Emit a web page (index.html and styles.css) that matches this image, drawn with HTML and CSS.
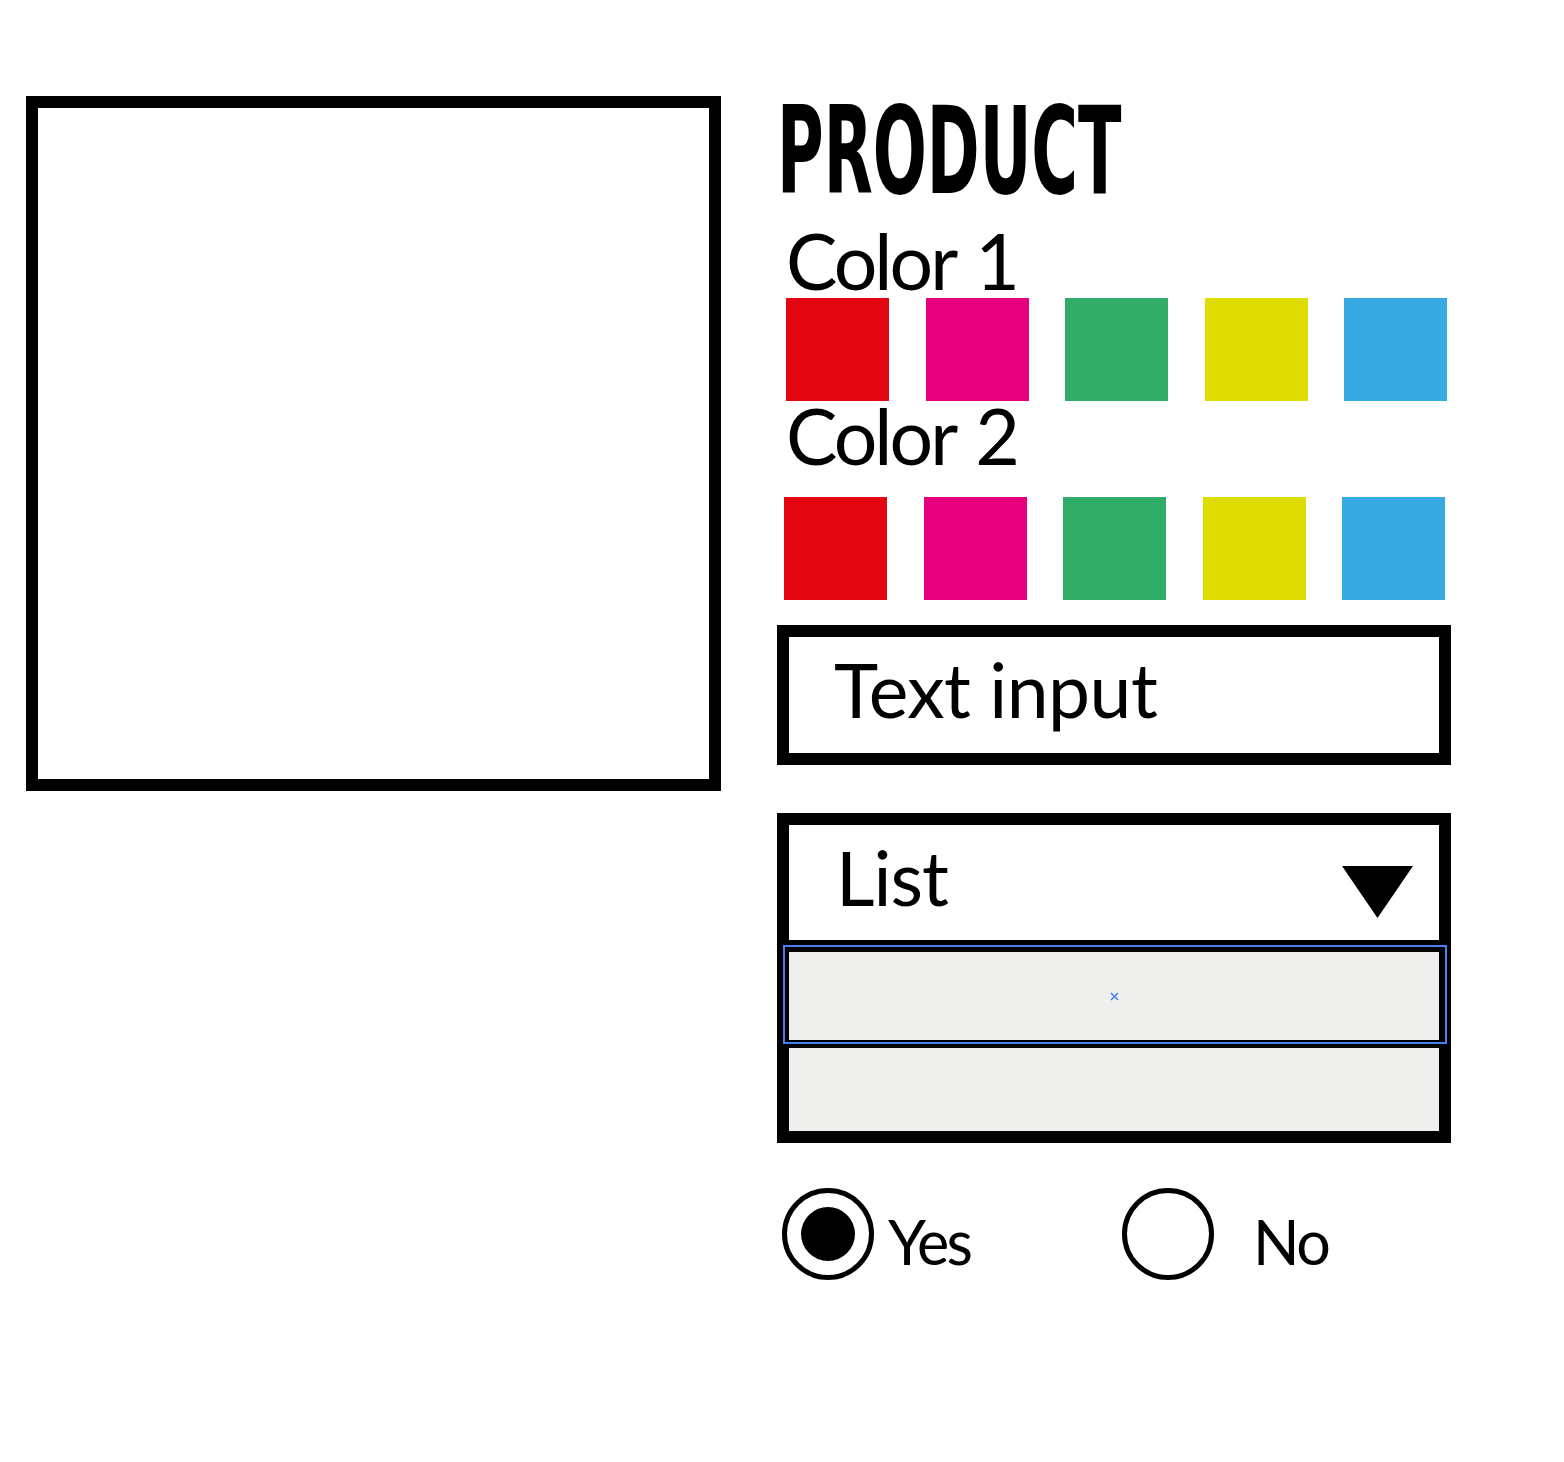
FILE: index.html
```html
<!DOCTYPE html>
<html lang="en">
<head>
    <meta charset="UTF-8">
    <meta name="viewport" content="width=device-width, initial-scale=1.0">
    <title>Product</title>
    <link rel="stylesheet" href="styles.css">
</head>
<body>
    <div class="page">
        <div class="preview"></div>

        <div class="options">
            <h1 class="title">PRODUCT</h1>

            <div class="label">Color 1</div>
            <div class="swatches">
                <span class="swatch red"></span>
                <span class="swatch magenta"></span>
                <span class="swatch green"></span>
                <span class="swatch yellow"></span>
                <span class="swatch blue"></span>
            </div>

            <div class="label label-second">Color 2</div>
            <div class="swatches swatches-second">
                <span class="swatch red"></span>
                <span class="swatch magenta"></span>
                <span class="swatch green"></span>
                <span class="swatch yellow"></span>
                <span class="swatch blue"></span>
            </div>

            <div class="field">Text input</div>

            <div class="list">
                <div class="list-head">
                    <span>List</span>
                    <svg class="list-arrow" width="71" height="52" viewBox="0 0 71 52">
                        <polygon points="0,0 71,0 35.5,52" fill="#000"/>
                    </svg>
                </div>
                <div class="list-item selected">
                    <svg width="9" height="9" viewBox="0 0 9 9">
                        <path d="M1 1 L8 8 M8 1 L1 8" stroke="#4a7ff2" stroke-width="1.6" fill="none"/>
                    </svg>
                </div>
                <div class="list-item list-item-last"></div>
            </div>

            <div class="radios">
                <label class="radio-option">
                    <span class="radio checked"></span>
                    <span class="radio-text">Yes</span>
                </label>
                <label class="radio-option">
                    <span class="radio"></span>
                    <span class="radio-text radio-text-no">No</span>
                </label>
            </div>
        </div>
    </div>
</body>
</html>
```

FILE: styles.css
```css
body {
    margin: 0;
    background-color: #fff;
    color: #000;
    font-family: Lato, "Open Sans", sans-serif;
}
.page {
    display: flex;
    align-items: flex-start;
    gap: 56px;
    padding: 96px 0 0 26px;
}
.preview {
    width: 695px;
    height: 695px;
    border: 12px solid #000;
    box-sizing: border-box;
}
.options {
    width: 674px;
    display: flex;
    flex-direction: column;
}
.title {
    margin: 0;
    font-family: "DejaVu Sans Condensed", "DejaVu Sans", sans-serif;
    font-stretch: condensed;
    font-weight: bold;
    font-size: 122px;
    line-height: 110px;
    white-space: nowrap;
    transform: scaleX(0.58);
    transform-origin: left center;
}
.label {
    margin-top: 16px;
    padding-left: 9px;
    font-size: 77px;
    line-height: 76px;
    letter-spacing: -3px;
    word-spacing: 5px;
}
.label-second {
    margin-top: -4px;
}
.swatches {
    display: grid;
    grid-template-columns: repeat(5, 103px);
    column-gap: 36.5px;
    padding-left: 9px;
}
.swatches-second {
    margin-top: 24px;
    padding-left: 7px;
}
.swatch {
    height: 103px;
}
.red { background-color: #e30613; }
.magenta { background-color: #e6007e; }
.green { background-color: #31ac69; }
.yellow { background-color: #dedc00; }
.blue { background-color: #36a9e1; }

.field {
    margin-top: 25px;
    height: 140px;
    box-sizing: border-box;
    border: 12px solid #000;
    padding: 14px 0 0 45px;
    font-size: 75px;
    line-height: 76px;
    letter-spacing: -0.5px;
}
.list {
    margin-top: 48px;
    border: 12px solid #000;
}
.list-head {
    height: 115px;
    box-sizing: border-box;
    padding: 14px 26px 0 47px;
    display: flex;
    justify-content: space-between;
    align-items: flex-start;
    font-size: 75px;
    line-height: 76px;
    letter-spacing: -1px;
}
.list-arrow {
    margin-top: 27px;
}
.list-item {
    height: 88px;
    border-top: 12px solid #000;
    background-color: #efefed;
    display: flex;
    align-items: center;
    justify-content: center;
}
.list-item-last {
    height: 83px;
    border-top-width: 8px;
}
.list-item.selected {
    position: relative;
}
.list-item.selected::after {
    content: "";
    position: absolute;
    top: -7px;
    bottom: -4px;
    left: -6px;
    right: -8px;
    border: 2px solid #4a7ff2;
}
.radios {
    margin-top: 45px;
    margin-left: 5px;
    display: flex;
}
.radio-option {
    flex: none;
    width: 340px;
    display: flex;
    align-items: flex-start;
}
.radio {
    flex: none;
    width: 92px;
    height: 92px;
    box-sizing: border-box;
    border: 5px solid #000;
    border-radius: 50%;
    display: flex;
    align-items: center;
    justify-content: center;
}
.radio.checked::after {
    content: "";
    width: 54px;
    height: 54px;
    border-radius: 50%;
    background-color: #000;
}
.radio-text {
    margin: 23px 0 0 14px;
    font-size: 61px;
    line-height: 61px;
    letter-spacing: -2.5px;
}
.radio-text-no {
    margin-left: 39px;
}
```
